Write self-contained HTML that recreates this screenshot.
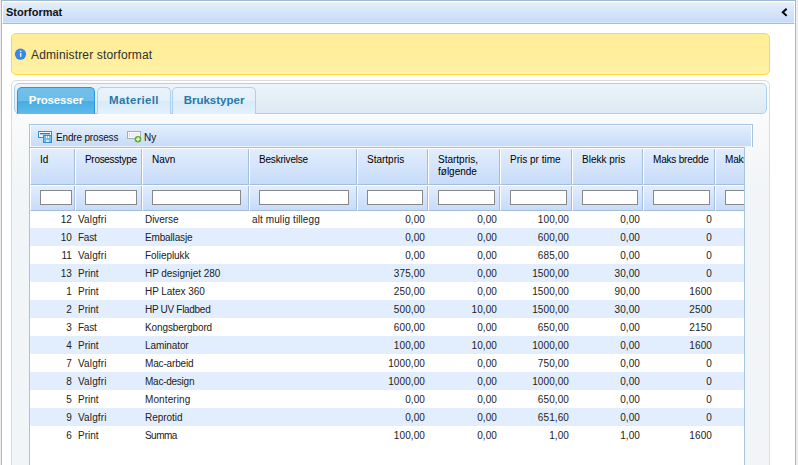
<!DOCTYPE html>
<html><head><meta charset="utf-8">
<style>
*{box-sizing:border-box;margin:0;padding:0}
html,body{width:798px;height:465px;overflow:hidden;background:#ededed;font-family:"Liberation Sans",sans-serif}
.a{position:absolute}
#panel{left:1px;top:0;width:795px;height:480px;border:1px solid #9fbad3;background:#fff}
#phead{left:2px;top:1px;width:793px;height:23px;border-top:1px solid #fff;border-left:1px solid #fff;border-right:1px solid #fff;border-bottom:1px solid #a3bed7;background:linear-gradient(#f4f3ea 0,#f4f3ea 1px,#e3eefb 1px,#c6dbf9 20px,#d9e7fb 20px)}
#ptitle{left:6px;top:6px;font-size:11px;font-weight:bold;color:#111}
#hl{left:11px;top:33px;width:759px;height:42px;border:1px solid #f9dd34;border-radius:5px;background:linear-gradient(#ffee98 0,#ffef9c 60%,#fff1aa 100%)}
#hltext{left:31px;top:48px;font-size:12px;color:#2e2e2e;letter-spacing:0.15px}
#tabs{left:11px;top:80px;width:759px;height:400px;border:1px solid #dcdcdc;border-radius:5px;background:linear-gradient(#fdfdfe 0,#f8fafb 40px,#f2f5f7 110px)}
#nav{left:14px;top:83px;width:753px;height:31px;border:1px solid #aed0ea;border-radius:5px;background:linear-gradient(#edf4fa,#dce9f4)}
.tab{top:87px;height:27px;border:1px solid #aed0ea;border-bottom:0;border-radius:5px 5px 0 0;background:linear-gradient(#e9f3fb 0,#e3f0fa 50%,#d7ebf9 50%,#e4f1fb 100%);color:#2779aa;font-weight:bold;font-size:11.5px;padding-top:6px;text-align:center}
.tab.act{border-color:#2694e8;background:linear-gradient(#72c0ea 0,#6abcea 50%,#45aee4 50%,#62b9e8 100%);color:#fff}
#grid{left:29px;top:147px;width:716px;height:340px;border:1px solid #a6c4dc;background:#fff}
#tbar{left:29px;top:124px;width:724px;height:23px;border:1px solid #a6c4dc;border-bottom:0;background:linear-gradient(#fbf8ee 0,#fbf8ee 1px,#e3eefb 1px,#c7dbf9 21px,#eef4fc 21px);box-shadow:inset 1px 0 #fff,inset -1px 0 #fff}
.tbt{top:132px;font-size:10px;color:#111}
#hdr{left:29px;top:147px;width:715px;height:64px;border-top:1px solid #a3bed7;overflow:hidden}
.th{position:absolute;top:0;height:37px;border-right:1px solid #a3bed7;border-left:1px solid #fff;border-bottom:1px solid #a3bed7;background:linear-gradient(#e3eefd,#c7dbf9);font-size:10px;color:#000;padding:6px 0 0 9px;line-height:12px}
.tf{position:absolute;top:37px;height:26px;border-right:1px solid #a3bed7;border-left:1px solid #fff;border-bottom:1px solid #a3bed7;background:linear-gradient(#e3eefd,#c7dbf9)}
.tf i{position:absolute;left:9px;top:5px;height:15px;border:1px solid #888;background:#fff}
.row{position:absolute;left:30px;width:714px;height:18px;font-size:10px;color:#222;line-height:18px}
.row.alt{background:#e2eefd}
.row span{position:absolute;top:1px;white-space:nowrap}
.r{letter-spacing:0.1px}
.t{letter-spacing:-0.15px}

</style></head><body>
<div id="panel" class="a"></div>
<div id="phead" class="a"></div>
<div id="ptitle" class="a">Storformat</div>
<svg class="a" style="left:0;top:0" width="798" height="24"><path d="M785.9 9.4 L782.8 12.3 L785.9 15.2" stroke="#000" stroke-width="2" fill="none" stroke-linecap="square"/></svg>
<div id="hl" class="a"></div>
<svg class="a" style="left:0;top:40px" width="40" height="30" viewBox="0 40 40 30"><circle cx="20.5" cy="54.2" r="5.6" fill="#3586ee"/><rect x="19.8" y="50.6" width="1.6" height="1.5" fill="#fdefb0"/><rect x="19.9" y="53" width="1.5" height="3.8" fill="#fdefb0"/></svg>
<div id="hltext" class="a">Administrer storformat</div>
<div id="tabs" class="a"></div>
<div id="nav" class="a"></div>
<div class="a tab act" style="left:17px;width:78px;letter-spacing:-0.15px">Prosesser</div>
<div class="a tab" style="left:97px;width:74px;letter-spacing:0.35px">Materiell</div>
<div class="a tab" style="left:172px;width:84px;letter-spacing:0px">Brukstyper</div>
<div id="grid" class="a"></div>
<div id="tbar" class="a"></div>
<svg class="a" style="left:0;top:120px" width="160" height="30" viewBox="0 120 160 30">
 <rect x="38" y="131" width="14" height="7" fill="#2f8fd2"/>
 <rect x="39" y="132" width="12" height="5" fill="#f4f8fc"/>
 <rect x="40" y="133" width="10" height="1.4" fill="#2a7cc4"/>
 <rect x="43" y="135" width="9" height="8" fill="#2f8fd2"/>
 <rect x="44" y="136" width="7" height="6" fill="#6cbcf0"/>
 <rect x="46" y="136" width="3" height="2" fill="#f4f6f8"/><rect x="47" y="136.5" width="1" height="1" fill="#5a7a90"/>
 <rect x="46" y="140" width="3" height="2" fill="#f3e2d6"/>
 <rect x="127" y="131" width="14" height="8" fill="#a3adba"/>
 <rect x="128" y="132" width="12" height="6" fill="#fafbfc"/>
 <rect x="131" y="133" width="8" height="4" fill="#eceff3"/>
 <rect x="129" y="133" width="1" height="4" fill="#cdd3da"/>
 <circle cx="138" cy="139.2" r="3.3" fill="#5fae1c"/>
 <rect x="136" y="138.5" width="4" height="1.5" fill="#e8f6da"/>
 <rect x="137.3" y="137.2" width="1.5" height="4" fill="#e8f6da"/>
</svg>
<div class="a tbt" style="left:56px;letter-spacing:-0.17px">Endre prosess</div>
<div class="a tbt" style="left:144px">Ny</div>
<div id="hdr" class="a">
<div class="th" style="left:1px;width:45px"><span style="letter-spacing:0px">Id</span></div>
<div class="tf" style="left:1px;width:45px"><i style="width:32px"></i></div>
<div class="th" style="left:46px;width:67px"><span style="letter-spacing:-0.3px">Prosesstype</span></div>
<div class="tf" style="left:46px;width:67px"><i style="width:52px"></i></div>
<div class="th" style="left:113px;width:107px"><span style="letter-spacing:0px">Navn</span></div>
<div class="tf" style="left:113px;width:107px"><i style="width:89px"></i></div>
<div class="th" style="left:220px;width:108px"><span style="letter-spacing:-0.2px">Beskrivelse</span></div>
<div class="tf" style="left:220px;width:108px"><i style="width:90px"></i></div>
<div class="th" style="left:328px;width:71px"><span style="letter-spacing:0px">Startpris</span></div>
<div class="tf" style="left:328px;width:71px"><i style="width:56px"></i></div>
<div class="th" style="left:399px;width:72px"><span style="letter-spacing:0px">Startpris,<br>følgende</span></div>
<div class="tf" style="left:399px;width:72px"><i style="width:57px"></i></div>
<div class="th" style="left:471px;width:72px"><span style="letter-spacing:0px">Pris pr time</span></div>
<div class="tf" style="left:471px;width:72px"><i style="width:57px"></i></div>
<div class="th" style="left:543px;width:71px"><span style="letter-spacing:0px">Blekk pris</span></div>
<div class="tf" style="left:543px;width:71px"><i style="width:56px"></i></div>
<div class="th" style="left:614px;width:72px"><span style="letter-spacing:-0.2px">Maks bredde</span></div>
<div class="tf" style="left:614px;width:72px"><i style="width:57px"></i></div>
<div class="th" style="left:686px;width:76px"><span style="letter-spacing:-0.2px">Maks høyde</span></div>
<div class="tf" style="left:686px;width:76px"><i style="width:61px"></i></div>
<div style="position:absolute;left:1px;top:0;width:714px;height:1px;background:#fff"></div>
<div style="position:absolute;left:1px;top:37px;width:714px;height:1px;background:#fff"></div>
</div>
<div class="row" style="top:210px"><span class="r" style="right:672px">12</span><span style="left:48px;letter-spacing:0.15px">Valgfri</span><span style="left:115px;letter-spacing:-0.05px">Diverse</span><span style="left:222px;letter-spacing:0.1px">alt mulig tillegg</span><span class="r" style="right:319px">0,00</span><span class="r" style="right:247px">0,00</span><span class="r" style="right:175px">100,00</span><span class="r" style="right:104px">0,00</span><span class="r" style="right:32px">0</span></div>
<div class="row alt" style="top:228px"><span class="r" style="right:672px">10</span><span style="left:48px;letter-spacing:-0.25px">Fast</span><span style="left:115px;letter-spacing:-0.15px">Emballasje</span><span class="r" style="right:319px">0,00</span><span class="r" style="right:247px">0,00</span><span class="r" style="right:175px">600,00</span><span class="r" style="right:104px">0,00</span><span class="r" style="right:32px">0</span></div>
<div class="row" style="top:246px"><span class="r" style="right:672px">11</span><span style="left:48px;letter-spacing:0.15px">Valgfri</span><span style="left:115px;letter-spacing:-0.05px">Folieplukk</span><span class="r" style="right:319px">0,00</span><span class="r" style="right:247px">0,00</span><span class="r" style="right:175px">685,00</span><span class="r" style="right:104px">0,00</span><span class="r" style="right:32px">0</span></div>
<div class="row alt" style="top:264px"><span class="r" style="right:672px">13</span><span style="left:48px;letter-spacing:0.0px">Print</span><span style="left:115px;letter-spacing:-0.05px">HP designjet 280</span><span class="r" style="right:319px">375,00</span><span class="r" style="right:247px">0,00</span><span class="r" style="right:175px">1500,00</span><span class="r" style="right:104px">30,00</span><span class="r" style="right:32px">0</span></div>
<div class="row" style="top:282px"><span class="r" style="right:672px">1</span><span style="left:48px;letter-spacing:0.0px">Print</span><span style="left:115px;letter-spacing:-0.05px">HP Latex 360</span><span class="r" style="right:319px">250,00</span><span class="r" style="right:247px">0,00</span><span class="r" style="right:175px">1500,00</span><span class="r" style="right:104px">90,00</span><span class="r" style="right:32px">1600</span></div>
<div class="row alt" style="top:300px"><span class="r" style="right:672px">2</span><span style="left:48px;letter-spacing:0.0px">Print</span><span style="left:115px;letter-spacing:-0.3px">HP UV Fladbed</span><span class="r" style="right:319px">500,00</span><span class="r" style="right:247px">10,00</span><span class="r" style="right:175px">1500,00</span><span class="r" style="right:104px">30,00</span><span class="r" style="right:32px">2500</span></div>
<div class="row" style="top:318px"><span class="r" style="right:672px">3</span><span style="left:48px;letter-spacing:-0.25px">Fast</span><span style="left:115px;letter-spacing:-0.1px">Kongsbergbord</span><span class="r" style="right:319px">600,00</span><span class="r" style="right:247px">0,00</span><span class="r" style="right:175px">650,00</span><span class="r" style="right:104px">0,00</span><span class="r" style="right:32px">2150</span></div>
<div class="row alt" style="top:336px"><span class="r" style="right:672px">4</span><span style="left:48px;letter-spacing:0.0px">Print</span><span style="left:115px;letter-spacing:-0.1px">Laminator</span><span class="r" style="right:319px">100,00</span><span class="r" style="right:247px">10,00</span><span class="r" style="right:175px">1000,00</span><span class="r" style="right:104px">0,00</span><span class="r" style="right:32px">1600</span></div>
<div class="row" style="top:354px"><span class="r" style="right:672px">7</span><span style="left:48px;letter-spacing:0.15px">Valgfri</span><span style="left:115px;letter-spacing:-0.15px">Mac-arbeid</span><span class="r" style="right:319px">1000,00</span><span class="r" style="right:247px">0,00</span><span class="r" style="right:175px">750,00</span><span class="r" style="right:104px">0,00</span><span class="r" style="right:32px">0</span></div>
<div class="row alt" style="top:372px"><span class="r" style="right:672px">8</span><span style="left:48px;letter-spacing:0.15px">Valgfri</span><span style="left:115px;letter-spacing:-0.25px">Mac-design</span><span class="r" style="right:319px">1000,00</span><span class="r" style="right:247px">0,00</span><span class="r" style="right:175px">1000,00</span><span class="r" style="right:104px">0,00</span><span class="r" style="right:32px">0</span></div>
<div class="row" style="top:390px"><span class="r" style="right:672px">5</span><span style="left:48px;letter-spacing:0.0px">Print</span><span style="left:115px;letter-spacing:0.1px">Montering</span><span class="r" style="right:319px">0,00</span><span class="r" style="right:247px">0,00</span><span class="r" style="right:175px">650,00</span><span class="r" style="right:104px">0,00</span><span class="r" style="right:32px">0</span></div>
<div class="row alt" style="top:408px"><span class="r" style="right:672px">9</span><span style="left:48px;letter-spacing:0.15px">Valgfri</span><span style="left:115px;letter-spacing:-0.05px">Reprotid</span><span class="r" style="right:319px">0,00</span><span class="r" style="right:247px">0,00</span><span class="r" style="right:175px">651,60</span><span class="r" style="right:104px">0,00</span><span class="r" style="right:32px">0</span></div>
<div class="row" style="top:426px"><span class="r" style="right:672px">6</span><span style="left:48px;letter-spacing:0.0px">Print</span><span style="left:115px;letter-spacing:-0.55px">Summa</span><span class="r" style="right:319px">100,00</span><span class="r" style="right:247px">0,00</span><span class="r" style="right:175px">1,00</span><span class="r" style="right:104px">1,00</span><span class="r" style="right:32px">1600</span></div>

</body></html>
